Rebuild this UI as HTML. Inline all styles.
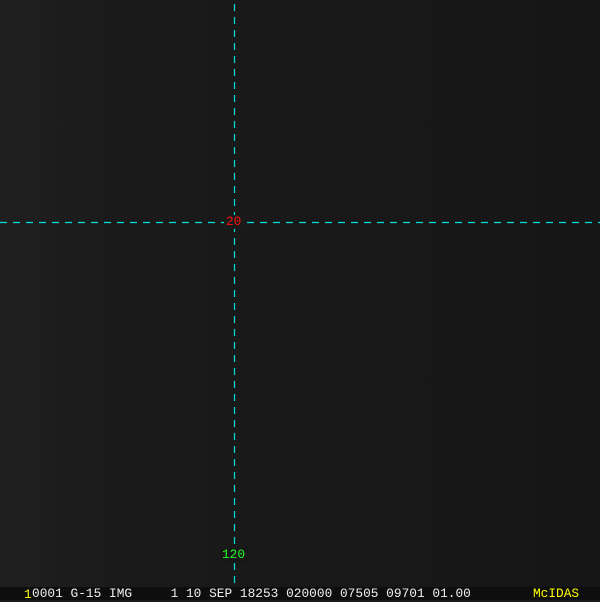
<!DOCTYPE html>
<html><head><style>
html,body{margin:0;padding:0;width:600px;height:600px;overflow:hidden;background:#1a1a1a}
.bg{position:absolute;left:0;top:0;width:600px;height:587px;background:linear-gradient(90deg,#1f1f1f 0,#1a1a1a 120px,#161616 600px)}
.bar{position:absolute;left:0;top:587px;width:600px;height:13px;background:#0e0e0e}
.t{position:absolute;font-family:"Liberation Mono",monospace;font-size:12.8px;line-height:13px;white-space:pre}
</style></head><body>
<div class="bg"></div>
<svg width="600" height="600" style="position:absolute;left:0;top:0">
<line x1="234.5" y1="4" x2="234.5" y2="587" stroke="#00e0e0" stroke-width="1.2" stroke-dasharray="7 6"/>
<line x1="0" y1="222.5" x2="600" y2="222.5" stroke="#00e0e0" stroke-width="1.2" stroke-dasharray="7 6"/>
<rect x="224" y="215" width="22" height="14" fill="#1a1a1a"/>
<rect x="220" y="548" width="29" height="14" fill="#171717"/>
</svg>
<div class="t" style="left:226px;top:215px;color:#ff1010">20</div>
<div class="t" style="left:222px;top:548px;color:#20ff20">120</div>
<div class="bar"></div>
<div class="t" style="left:24px;top:588px;color:#ffff00">1</div>
<div class="t" style="left:32px;top:587px;color:#f0f0f0;letter-spacing:0.02px">0001 G-15 IMG     1 10 SEP 18253 020000 07505 09701 01.00</div>
<div class="t" style="left:533px;top:587px;color:#ffff00">McIDAS</div>
</body></html>
